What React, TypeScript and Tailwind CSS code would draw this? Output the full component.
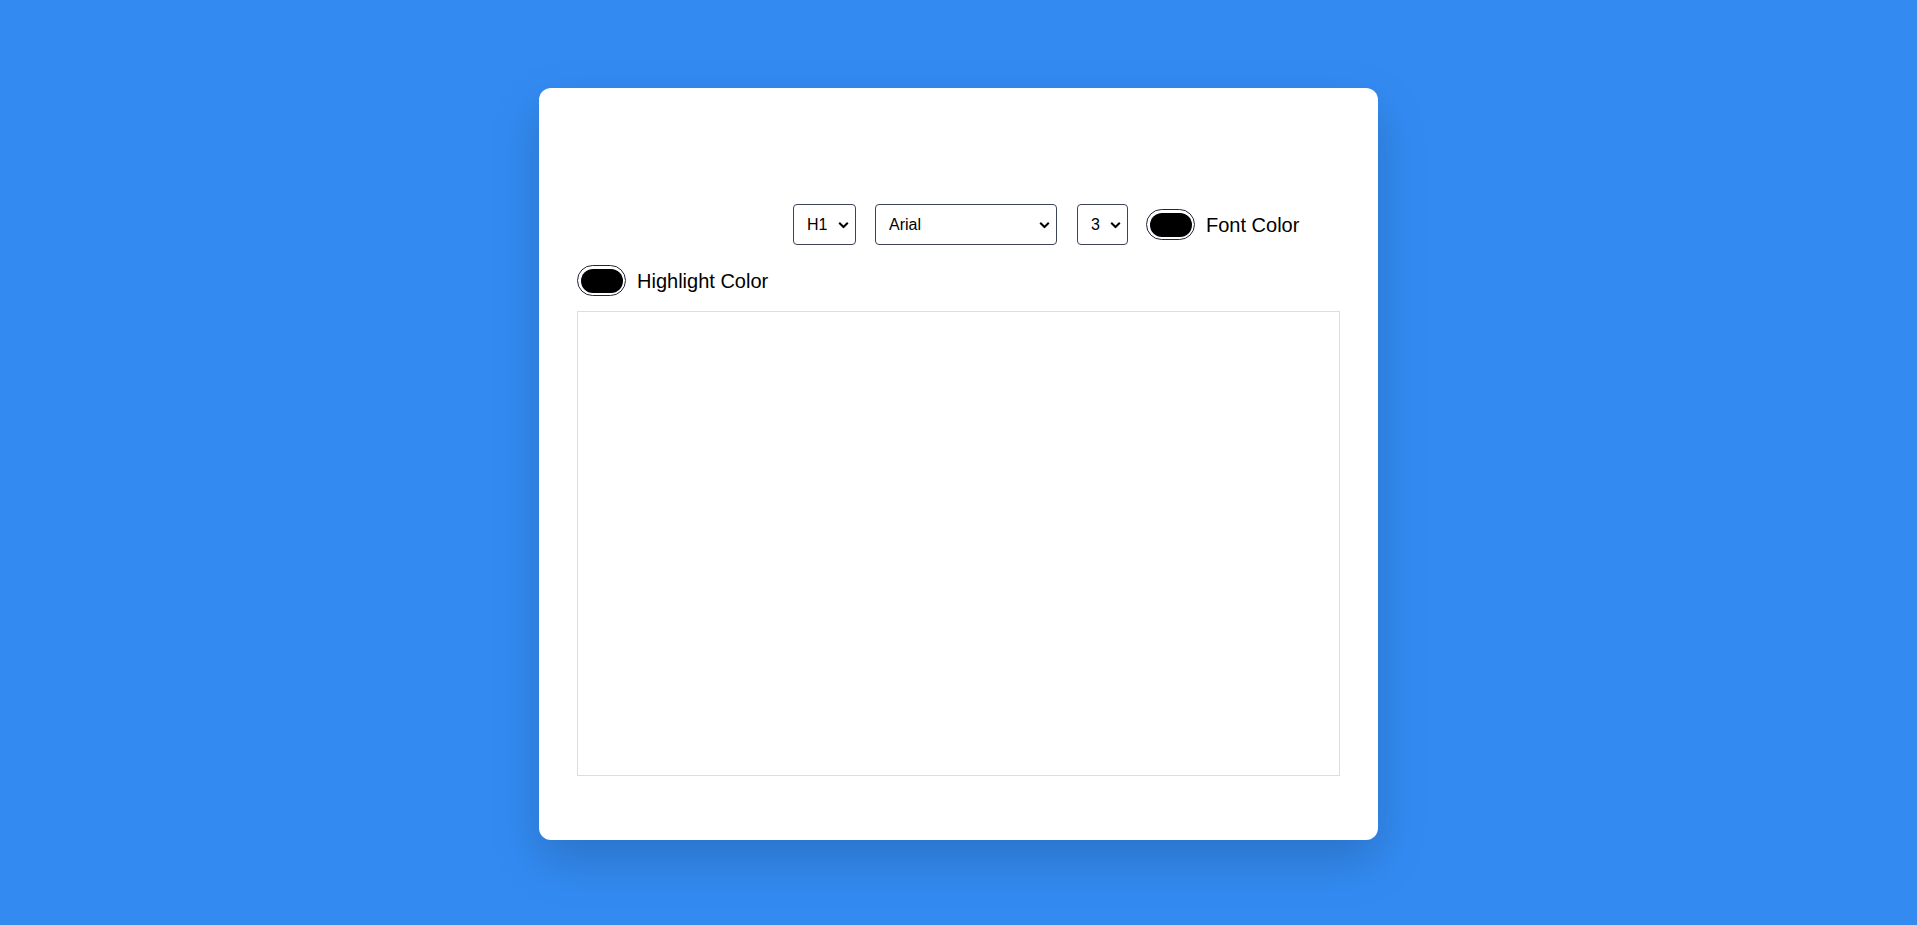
import { useState } from 'react';

function ColorSwatch({ label }: { label: string }) {
  return (
    <label className="flex items-center gap-[11px] cursor-pointer">
      <span className="flex h-[31px] w-[49px] items-center justify-center rounded-full border-[1.5px] border-[#23233a] bg-white p-[2.5px]">
        <span className="h-full w-full rounded-full bg-black" />
      </span>
      <span className="text-[20px] leading-none text-black">{label}</span>
    </label>
  );
}

function Select({
  value,
  options,
  onChange,
  className,
}: {
  value: string;
  options: string[];
  onChange: (v: string) => void;
  className: string;
}) {
  return (
    <div className={`relative ${className}`}>
      <select
        value={value}
        onChange={(e) => onChange(e.target.value)}
        className="h-[41px] w-full appearance-none rounded-[4px] border border-[#3f4358] bg-white pl-[13px] pr-[24px] text-[16px] text-black outline-none"
      >
        {options.map((o) => (
          <option key={o}>{o}</option>
        ))}
      </select>
      <svg
        className="pointer-events-none absolute right-[7px] top-1/2 -translate-y-1/2"
        width="11"
        height="7"
        viewBox="0 0 11 7"
        fill="none"
      >
        <path d="M1.2 1.2 L5.5 5.5 L9.8 1.2" stroke="#000" strokeWidth="2" />
      </svg>
    </div>
  );
}

export default function App() {
  const [heading, setHeading] = useState('H1');
  const [font, setFont] = useState('Arial');
  const [size, setSize] = useState('3');

  return (
    <div
      className="flex h-[925px] w-full items-start justify-center bg-[#338bf2] pt-[88px]"
      style={{ fontFamily: '"Liberation Sans", Arial, sans-serif' }}
    >
      <div className="flex h-[752px] w-[839px] flex-col rounded-[12px] bg-white px-[38px] pt-[116px] shadow-[0_20px_50px_rgba(0,0,0,0.18)]">
        <div className="flex items-center pl-[216px]">
          <Select
            value={heading}
            onChange={setHeading}
            options={['H1', 'H2', 'H3', 'H4', 'H5', 'H6']}
            className="w-[63px]"
          />
          <Select
            value={font}
            onChange={setFont}
            options={['Arial', 'Verdana', 'Times New Roman', 'Garamond', 'Georgia', 'Courier New', 'cursive']}
            className="ml-[19px] w-[182px]"
          />
          <Select
            value={size}
            onChange={setSize}
            options={['1', '2', '3', '4', '5', '6', '7']}
            className="ml-[20px] w-[51px]"
          />
          <div className="ml-[18px]">
            <ColorSwatch label="Font Color" />
          </div>
        </div>

        <div className="mt-[20px] flex items-center">
          <ColorSwatch label="Highlight Color" />
        </div>

        <div
          contentEditable
          suppressContentEditableWarning
          className="mt-[15px] h-[465px] w-full border border-[#dddddd] p-[10px] outline-none"
        />
      </div>
    </div>
  );
}
